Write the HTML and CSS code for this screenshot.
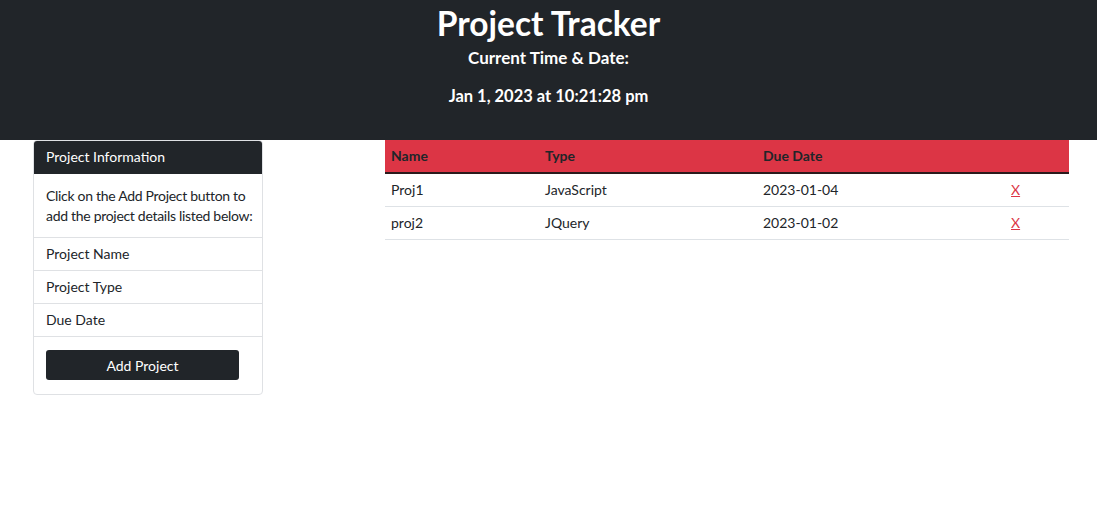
FILE: index.html
```html
<!DOCTYPE html>
<html lang="en">
<head>
<meta charset="utf-8">
<title>Project Tracker</title>
<link rel="stylesheet" href="styles.css">
</head>
<body>
<header class="hero">
  <h1 class="hero-title">Project Tracker</h1>
  <h2 class="hero-sub">Current Time &amp; Date:</h2>
  <p class="hero-time">Jan 1, 2023 at 10:21:28 pm</p>
</header>
<main class="layout">
  <section class="card">
    <div class="card-header">Project Information</div>
    <div class="card-body">Click on the Add Project button to add the project details listed below:</div>
    <ul class="list">
      <li class="list-item">Project Name</li>
      <li class="list-item">Project Type</li>
      <li class="list-item">Due Date</li>
    </ul>
    <div class="card-footer">
      <button class="btn">Add Project</button>
    </div>
  </section>
  <section class="table-wrap">
    <table class="table">
      <colgroup>
        <col class="c-name"><col class="c-type"><col class="c-date"><col class="c-del">
      </colgroup>
      <thead>
        <tr><th>Name</th><th>Type</th><th>Due Date</th><th></th></tr>
      </thead>
      <tbody>
        <tr><td>Proj1</td><td>JavaScript</td><td>2023-01-04</td><td><a class="del" href="#">X</a></td></tr>
        <tr><td>proj2</td><td>JQuery</td><td>2023-01-02</td><td><a class="del" href="#">X</a></td></tr>
      </tbody>
    </table>
  </section>
</main>
</body>
</html>
```

FILE: styles.css
```css
* { box-sizing: border-box; }
html, body { margin: 0; padding: 0; }
body {
  font-family: Lato, "Open Sans", sans-serif;
  font-size: 14px;
  line-height: 1.5;
  color: #212529;
  background: #fff;
}
.hero {
  background: #212529;
  color: #fff;
  height: 140px;
  text-align: center;
  padding-top: 2px;
}
.hero-title {
  margin: 0;
  font-size: 33.5px;
  font-weight: 700;
  line-height: 42px;
}
.hero-sub {
  margin: 0;
  font-size: 17px;
  font-weight: 700;
  line-height: 27px;
}
.hero-time {
  margin: 13px 0 0;
  font-size: 16.5px;
  font-weight: 700;
  line-height: 24px;
}
.layout {
  display: flex;
  align-items: flex-start;
  padding: 0 28px 0 33px;
  gap: 122px;
}
.card {
  width: 230px;
  flex: none;
  border: 1px solid #dfe1e4;
  border-radius: 4px;
  overflow: hidden;
}
.card-header {
  background: #212529;
  color: #fff;
  height: 33px;
  line-height: 32px;
  padding: 0 12px;
}
.card-body {
  padding: 12px 6px 12px 12px;
  line-height: 19.5px;
  letter-spacing: -0.3px;
  border-bottom: 1px solid #dfe1e4;
}
.list { list-style: none; margin: 0; padding: 0; }
.list-item {
  height: 33px;
  line-height: 32px;
  padding: 0 12px;
  border-bottom: 1px solid #dfe1e4;
}
.card-footer { padding: 13px 12px 14px; }
.btn {
  display: block;
  width: 193px;
  height: 30px;
  border: 0;
  border-radius: 3px;
  background: #212529;
  color: #fff;
  font: inherit;
  cursor: pointer;
}
.table-wrap { flex: 1; }
.table {
  width: 100%;
  border-collapse: collapse;
  table-layout: fixed;
}
.c-name { width: 154px; }
.c-type { width: 218px; }
.c-date { width: 248px; }
.c-del { width: 64px; }
.table th {
  background: #dc3545;
  text-align: left;
  font-weight: 700;
  height: 33px;
  padding: 0 6px 1px;
  border-bottom: 2px solid #2a1a1c;
}
.table td {
  height: 33px;
  padding: 0 6px;
  border-bottom: 1px solid #dee2e6;
}
.del { color: #dc3545; text-decoration: underline; }
```
